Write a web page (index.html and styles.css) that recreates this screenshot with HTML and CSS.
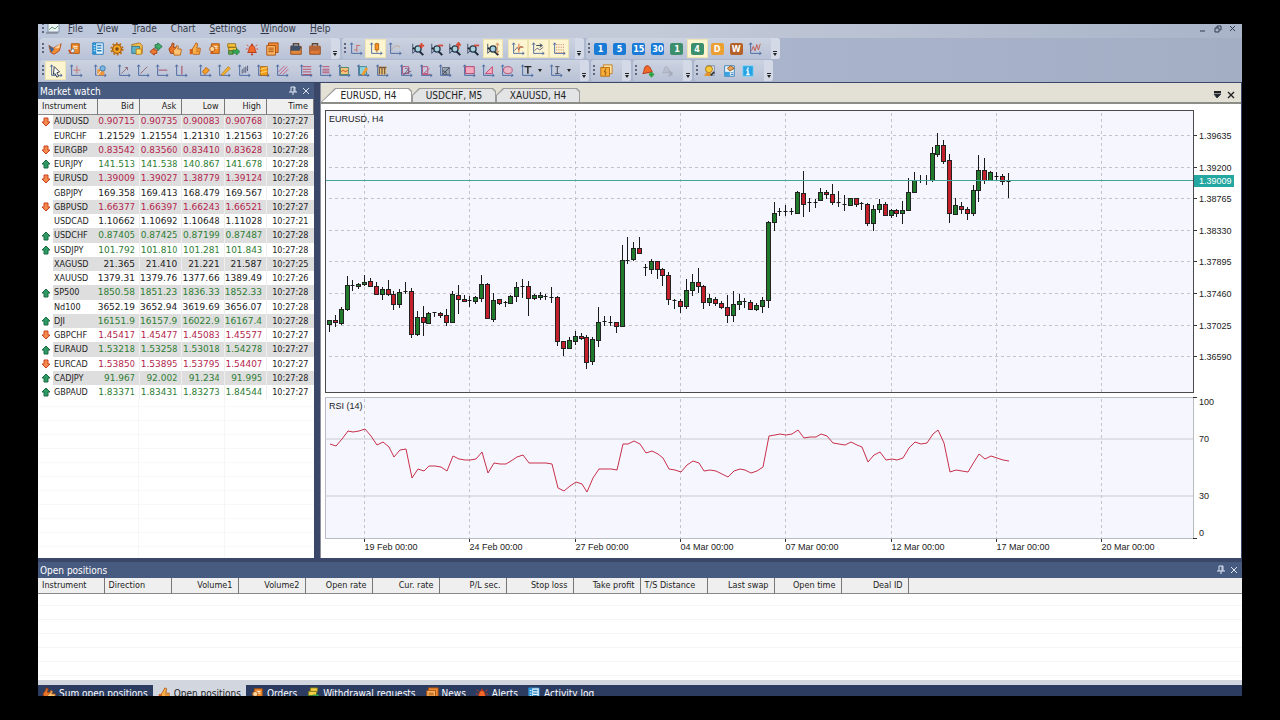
FILE: index.html
```html
<!doctype html>
<html lang="en">
  <head>
    <meta charset="utf-8">
    <title>EURUSD, H4</title>
    <link rel="stylesheet" href="styles.css">
  </head>
  <body>
    <div class="app">
      <nav class="menubar">
        <i class="grip"></i>
        <svg class="menu-icon" viewBox="0 0 14 12"><rect x="2" y="0" width="11" height="9" fill="#eef4f4" stroke="#7f93a8"/><path d="M3 7l3-3 3 2 3-3" stroke="#5d9c78" fill="none"/><path d="M0 10h12" stroke="#6b6f79"/></svg>
        <button><u>F</u>ile</button>
        <button><u>V</u>iew</button>
        <button><u>T</u>rade</button>
        <button>Chart</button>
        <button><u>S</u>ettings</button>
        <button><u>W</u>indow</button>
        <button><u>H</u>elp</button>
        <div class="window-buttons">
          <button aria-label="Minimize"><svg viewBox="0 0 10 10"><path d="M2 7h5" /></svg></button>
          <button aria-label="Restore"><svg viewBox="0 0 10 10"><path d="M4 4V2h4v4H7M2 4h4v4H2z" /></svg></button>
          <button aria-label="Close"><svg viewBox="0 0 10 10"><path d="M2 2l5 5M7 2l-5 5" /></svg></button>
        </div>
      </nav>
      <div class="toolbar-row" id="toolbarTop"></div>
      <div class="toolbar-row" id="toolbarBottom"></div>

      <main class="workspace">
        <section class="market">
          <header class="panel-title">
            <h2>Market watch</h2>
            <button aria-label="Pin"><svg viewBox="0 0 10 10"><path d="M3 1v5M3 1h4v5M6 1v5M1 6h8M5 6v3" /></svg></button>
            <button aria-label="Close"><svg viewBox="0 0 10 10"><path d="M2 2l6 6M8 2l-6 6" /></svg></button>
          </header>
          <div class="market-body">
            <table>
              <colgroup>
                <col class="col-arrow"><col class="col-name"><col><col><col><col><col class="col-time">
              </colgroup>
              <thead>
                <tr><th colspan="2" class="left">Instrument</th><th>Bid</th><th>Ask</th><th>Low</th><th>High</th><th>Time</th></tr>
              </thead>
              <tbody id="quotes"></tbody>
            </table>
          </div>
        </section>

        <section class="charts">
          <div class="chart-tabs">
            <button class="active"><span>EURUSD, H4</span></button>
            <button><span>USDCHF, M5</span></button>
            <button><span>XAUUSD, H4</span></button>
            <div class="tab-tools">
              <button aria-label="Chart list"><svg viewBox="0 0 10 10"><path d="M1 2h7" stroke="#222" stroke-width="2"/><path d="M1 4h7L4 8z" fill="#222"/></svg></button>
              <button aria-label="Close chart"><svg viewBox="0 0 10 10"><path d="M1 2l6 6M7 2l-6 6" stroke="#222" stroke-width="1.4"/></svg></button>
            </div>
          </div>
          <div class="chart" id="chart"></div>
        </section>
      </main>

      <section class="positions">
        <header class="panel-title">
          <h2>Open positions</h2>
          <button aria-label="Pin"><svg viewBox="0 0 10 10"><path d="M3 1v5M3 1h4v5M6 1v5M1 6h8M5 6v3" /></svg></button>
          <button aria-label="Close"><svg viewBox="0 0 10 10"><path d="M2 2l6 6M8 2l-6 6" /></svg></button>
        </header>
        <div class="positions-body">
          <table>
            <thead>
              <tr>
                <th class="left">Instrument</th><th class="left">Direction</th><th>Volume1</th><th>Volume2</th>
                <th>Open rate</th><th>Cur. rate</th><th>P/L sec.</th><th>Stop loss</th><th>Take profit</th>
                <th class="left">T/S Distance</th><th>Last swap</th><th>Open time</th><th>Deal ID</th><td></td>
              </tr>
            </thead>
          </table>
        </div>
        <div class="bottom-tabs" id="bottomTabs"></div>
      </section>
    </div>

    <script>
      const axes = '<path d="M3 1v12h12M1.500 3L3 1l1.500 2M13 11.500l2 1.500-2 1.500" stroke="#41619c"/>';
      const lens = '<path d="M2 2v11M2 13l3-3" stroke="#354766"/><path d="M2 7l3 1" stroke="#222" stroke-width="2"/><circle cx="8" cy="8" r="3.500" fill="#a9d3dc" stroke="#263a50" stroke-width="1.500"/><path d="M10 11l4 4" stroke="#1d2b3c" stroke-width="2.400"/>';
      const sheet = '<path d="M5 2h9v11H5z" fill="#f08a24" stroke="#a8500f"/><path d="M7 5h5M7 7h5" stroke="#fff"/>';
      const thumb = '<path d="M2 8h3v6H2z" fill="#d8621c"/><path d="M5 8l3-5 1-2 2 1-1 5h4v2l-1 5H6l-1-1z" fill="#fbb04a" stroke="#b85a12"/><path d="M9 9h4M9 11h4" stroke="#c8701c"/>';
      const green = '<path d="M8 9h4V7l4 4-4 4v-2H8z" fill="#35a555" stroke="#1c7338" stroke-width=".6"/>';
      const bell = '<path d="M3 12c2-2 1-8 5-8s3 6 5 8z" fill="#f0692a" stroke="#b33412"/><path d="M8 2v2M7 14h2" stroke="#b33412" stroke-width="2"/>';
      const brief = (body, lid) => '<path d="M5 5V2h6v3" stroke="#5b4636" stroke-width="1.500"/><path d="M2 5h12v9H2z" fill="' + body + '" stroke="#8b4517"/><path d="M2 4h9l3 2-2 4H2z" fill="' + lid + '"/>';

      const icons = {
        open: '<path d="M1 4l5 3 9-5-2 8-6 4-4-2z" fill="#f38a35" stroke="#b44d17"/><path d="M1 4l3 8 3-4z" fill="#35659a"/><path d="M7 7l7-5-1 5z" fill="#ffd39a"/>',
        save: sheet + '<path d="M2 13l5-6 2 4z" fill="#fff" stroke="#6b7f96"/><path d="M2 9l3 4" stroke="#d95017" stroke-width="2"/>',
        list: '<path d="M2 1h12v13H2z" fill="#e9f7ff" stroke="#1d70b5"/><path d="M2 1h4v13H2z" fill="#2590d4"/><path d="M7 4h5M7 7h5M7 10h5" stroke="#267fba" stroke-width="1.500"/><path d="M3 4h2M3 7h2M3 10h2" stroke="#fff"/>',
        gear: '<circle cx="8" cy="8" r="5" fill="#f7a726" stroke="#a75c0a" stroke-width="1.500"/><circle cx="8" cy="8" r="6.500" stroke="#bf6d0c" stroke-dasharray="2 2.100" stroke-width="2"/><circle cx="8" cy="8" r="2" fill="#7d4a12"/>',
        cards: '<path d="M2 3l9-2 3 3v9H4z" fill="#f7c04b" stroke="#b06d13"/><path d="M2 5h9v8H2z" fill="#5eb3c9" stroke="#2b778c"/><path d="M7 8h6v6H7z" fill="#ffdb6b" stroke="#b87816"/>',
        swap: '<path d="M7 3h3V1l5 4-5 5V7H7z" fill="#3fae66" stroke="#217444"/><path d="M9 9H6V7l-5 4 5 4v-2h3z" fill="#ee7a32" stroke="#a83f10"/>',
        thumbs: '<path d="M1 8l3-4 1-3 2 1-1 4h3v4l-1 3H3z" fill="#e8742c" stroke="#9a3f0d"/><path d="M6 10l3-3 1-3 2 1-1 3h4v3l-1 4H7z" fill="#fdc374" stroke="#b86213"/>',
        thumb: thumb,
        orders: sheet + '<circle cx="6" cy="8" r="3" fill="#fbd49a" stroke="#b45814"/><path d="M3 13l3-3 2 3z" fill="#d65216"/>',
        deals: '<path d="M2 2h9v4H2zM3 6h9v4H3z" fill="#fbc53d" stroke="#947018"/><path d="M3 10h5v4H3z" fill="#62aa4f" stroke="#3a7430"/>' + green,
        alarm: bell + '<path d="M2 3l2 2M14 3l-2 2M1 8h2M13 8h2" stroke="#e33d1d"/>',
        news: '<path d="M4 1h11v11H4z" fill="#ef8a33" stroke="#a84d0e"/><path d="M2 4h10v11H2z" fill="#f9b25f" stroke="#a84d0e"/><path d="M4 7h6M4 9h6M4 11h6" stroke="#a84d0e"/>',
        case1: brief("#e48a38", "#3d5068"),
        case2: brief("#e07a35", "#b5653a"),
        pointer: axes + '<path d="M6 3l6 6-3 1 2 4-2 1-2-4-2 1z" fill="#fff" stroke="#222b3e"/>',
        cross: axes + '<path d="M9 2v9M5 7h8" stroke="#c76e67"/>',
        shapes: axes + '<rect x="5" y="6" width="8" height="7" fill="#f0963b"/><circle cx="11" cy="5" r="3" fill="#7bb7df" stroke="#3c78aa"/><path d="M5 13l4-5" stroke="#fff"/>',
        ray: axes + '<path d="M5 11l7-7M9 4h3v3" stroke="#8d6674"/>',
        trend: axes + '<path d="M5 11l8-8" stroke="#8d6674"/>',
        hline: axes + '<path d="M4 7h10" stroke="#9b3f58"/>',
        vline: axes + '<path d="M9 2v10" stroke="#a52e45"/>',
        pen: axes + '<path d="M5 9l4-5 4 3-5 5z" fill="#f5a127" stroke="#b7610e"/>',
        pens: axes + '<path d="M5 12l8-9 2 2-8 8z" fill="#f9bc32" stroke="#bf760d"/>',
        bars: axes + '<path d="M6 6v5M8 4v6M10 3v7M12 2v6" stroke="#444c6a"/><path d="M5 9l8-5" stroke="#8b90a6"/>',
        flag: axes + '<path d="M5 3h8v10H5z" fill="#f6a11d" stroke="#a66211"/><path d="M5 6l8-2M5 10l8-2" stroke="#ffdf75"/>',
        hatch: axes + '<path d="M4 9l7-7M5 12l9-9M9 12l6-6" stroke="#c24e7a"/>',
        levels: axes + '<path d="M4 3h10M4 6h10M4 9h10M4 12h10" stroke="#b84667"/>',
        levels2: axes + '<path d="M5 3h8M5 6h8M5 8h8M5 10h8" stroke="#b84667"/>',
        wave: axes + '<path d="M4 4h9v8H4z" fill="#f5c57c" stroke="#42815b"/><path d="M5 9c3-5 4 3 7-2" stroke="#c53923"/>',
        fibo: axes + '<path d="M4 3h8v9H4z" fill="#8fd2db" stroke="#35808d"/><path d="M6 12l5-8 3 1-5 8z" fill="#f29b31"/>',
        columns: axes + '<path d="M4 3h9v9H4z" fill="#eec477"/><path d="M5 5v7M8 3v9M11 4v8M4 4h9" stroke="#775b46" stroke-width="1.500"/>',
        fan: axes + '<path d="M4 3h7v8H4z" stroke="#b54778"/><path d="M5 12l7-7M5 12l9-4M7 5c4 0 5 3 4 6" stroke="#765879"/>',
        gann: axes + '<path d="M4 3h6v8H4z" stroke="#b54778"/><path d="M4 12l8-7M4 12h9" stroke="#bf5175"/>',
        arcs: axes + '<path d="M5 4h8v8H5z" fill="#9aa6b2" stroke="#5b6879"/><path d="M5 12l8-8M5 8c4 0 5 2 4 4" stroke="#333d50"/>',
        rect: axes + '<path d="M4 3h10v8H4z" fill="#f2aac0" stroke="#a93b67"/>',
        tri: axes + '<path d="M5 11l8-8v8z" fill="#f5a9bf" stroke="#c64069"/>',
        oval: axes + '<ellipse cx="9" cy="7" rx="5" ry="4" fill="#e9b7c9" stroke="#a94d70"/>',
        text: axes + '<path d="M5 3h8M9 3v8" stroke="#222" stroke-width="1.600"/>',
        label: axes + '<path d="M7 3h5M9.500 3v8M7 11h5" stroke="#3c4150"/>',
        ohlc: axes + '<path d="M9 3v8M6 9h3M9 4h4" stroke="#c8685b"/>',
        candle: axes + '<path d="M9 1v11" stroke="#96511c"/><path d="M7 2h4v7H7z" fill="#f8961f" stroke="#b75f09"/>',
        curve: axes + '<path d="M4 9c3-5 6-6 10-3" stroke="#c1a17b"/>',
        zoomIn: lens + '<path d="M9 4h6M12 1v6" stroke="#e0432b" stroke-width="2"/>',
        zoomOut: lens + '<path d="M9 4h6" stroke="#d7473b" stroke-width="2"/>',
        zoomUp: lens + '<path d="M12 8V2M9.500 4L12 1l2.500 3" stroke="#d84d36" stroke-width="2"/>',
        zoomFit: lens + '<path d="M13 2v10M11 4l2-3 2 3M11 10l2 3 2-3" stroke="#d18b58"/>',
        shift: axes + '<path d="M4 10l3-4 2 3 2-4 3 1" stroke="#756a73"/><path d="M9 2v10M9 6h5" stroke="#d9632d"/>',
        scroll: axes + '<path d="M4 10l3-3 3 2 4-3" stroke="#59617a"/><path d="M6 4h6M10 2l3 2-3 2" stroke="#22334e"/>',
        grid: axes + '<path d="M5 3h9M5 6h9M5 9h9M5 12h9" stroke="#cc5d4d" stroke-dasharray="1 1.500"/>',
        indicator: axes + '<path d="M4 10l2-5 2 5 2-7 2 6 2-7" stroke="#c44f42"/>',
        windows: '<path d="M5 1h10v10H5z" fill="#ffe0a3" stroke="#c17a1c"/><path d="M2 4h10v10H2z" fill="#f7ae38" stroke="#b5690d"/><path d="M8 5l-2 4h2l-1 4" stroke="#8a4b0b"/>',
        bellAdd: '<path d="M2 11c2-2 1-9 5-9s4 5 6 7z" fill="#f0692a" stroke="#b33412"/><path d="M9 12h6M12 9v6" stroke="#27a03b" stroke-width="2.400"/>',
        bellOff: '<g opacity=".350"><path d="M3 10c3-3 1-7 4-7s3 4 5 7z" fill="#aab" stroke="#778"/><path d="M10 8l4 5M14 9l-4 5" stroke="#778" stroke-width="2"/></g>',
        support: '<path d="M6 2h8v11H6z" fill="#e7eef7" stroke="#6e829b"/><circle cx="8" cy="6" r="4" fill="#fac93b" stroke="#9b6c15"/><path d="M2 13l4-4 5 2-2 3z" fill="#e3922b"/><path d="M10 13l4-4" stroke="#333" stroke-width="2"/>',
        report: '<path d="M3 2h11v12H3z" fill="#e7f5ff" stroke="#327cb5"/><path d="M3 9h6v5H3z" fill="#3ca3df"/><path d="M6 5l4-3 4 3-5 3z" fill="#e7a357" stroke="#98551b"/><path d="M10 10h3M10 12h3" stroke="#327cb5"/>',
        info: '<path d="M2 2h12v12H2z" fill="#26a3e3" stroke="#93d5f6"/><path d="M8 4v2M8 7v5M6 12h4M6 7h2" stroke="#fff" stroke-width="1.600"/>',
        withdraw: '<path d="M5 1h8v4H5zM3 5h9v5H3z" fill="#f7cd44" stroke="#888019"/><path d="M2 10h7v4H2z" fill="#4aa548" stroke="#2e7a34"/>' + green
      };

      function icon(name) {
        return `<svg class="icon" viewBox="0 0 16 16" fill="none" aria-hidden="true">${icons[name]}</svg>`;
      }

      // "|" is a gap, "*" marks a pressed button, "v" a button with a menu arrow, "#" a timeframe
      const toolbarTop = [
        ["main", "open save | list gear cards swap thumbs thumb orders deals alarm news | case1 case2"],
        ["view", "ohlc *candle curve | zoomIn zoomOut zoomUp zoomOut *zoomFit | *shift *scroll *grid"],
        ["frames", "#1:blue #5:blue #15:blue #30:blue #1:green *#4:green #D:orange #W:brown indicator"],
      ];
      const toolbarBottom = [
        ["draw", "*pointer cross | shapes | ray trend hline vline | pen pens bars flag hatch | levels levels2 wave fibo columns | fan gann arcs | rect tri oval vtext vlabel"],
        ["single", "windows"],
        ["pair", "bellAdd bellOff"],
        ["help", "support report info"],
      ];

      function toolButton(item) {
        if (item === "|") return '<i class="gap"></i>';
        let cls = "tool";
        if (item[0] === "*") {
          cls += " pressed";
          item = item.slice(1);
        }
        if (item[0] === "#") {
          const [label, color] = item.slice(1).split(":");
          return `<button class="${cls}"><span class="frame ${color}">${label}</span></button>`;
        }
        if (item === "vtext" || item === "vlabel") {
          return `<button class="${cls} wide" aria-label="${item.slice(1)}">${icon(item.slice(1))}<i class="arrow"></i></button>`;
        }
        return `<button class="${cls}" aria-label="${item}">${icon(item)}</button>`;
      }

      function renderToolbar(id, bars) {
        document.getElementById(id).innerHTML = bars
          .map(([name, items]) => `<div class="toolbar ${name}"><i class="grip"></i>${items.split(" ").map(toolButton).join("")}<button class="more" aria-label="More"><i class="arrow"></i></button></div>`)
          .join("");
      }

      const quotes = [
        ["d", "AUDUSD", "0.90715", "0.90735", "0.90083", "0.90768", "27"],
        ["", "EURCHF", "1.21529", "1.21554", "1.21310", "1.21563", "26"],
        ["d", "EURGBP", "0.83542", "0.83560", "0.83410", "0.83628", "28"],
        ["u", "EURJPY", "141.513", "141.538", "140.867", "141.678", "28"],
        ["d", "EURUSD", "1.39009", "1.39027", "1.38779", "1.39124", "28"],
        ["", "GBPJPY", "169.358", "169.413", "168.479", "169.567", "28"],
        ["d", "GBPUSD", "1.66377", "1.66397", "1.66243", "1.66521", "27"],
        ["", "USDCAD", "1.10662", "1.10692", "1.10648", "1.11028", "21"],
        ["u", "USDCHF", "0.87405", "0.87425", "0.87199", "0.87487", "28"],
        ["u", "USDJPY", "101.792", "101.810", "101.281", "101.843", "28"],
        ["", "XAGUSD", "21.365", "21.410", "21.221", "21.587", "25"],
        ["", "XAUUSD", "1379.31", "1379.76", "1377.66", "1389.49", "26"],
        ["u", "SP500", "1850.58", "1851.23", "1836.33", "1852.33", "28"],
        ["", "Nd100", "3652.19", "3652.94", "3619.69", "3656.07", "28"],
        ["u", "DJI", "16151.9", "16157.9", "16022.9", "16167.4", "28"],
        ["d", "GBPCHF", "1.45417", "1.45477", "1.45083", "1.45577", "27"],
        ["u", "EURAUD", "1.53218", "1.53258", "1.53018", "1.54278", "27"],
        ["d", "EURCAD", "1.53850", "1.53895", "1.53795", "1.54407", "27"],
        ["u", "CADJPY", "91.967", "92.002", "91.234", "91.995", "28"],
        ["u", "GBPAUD", "1.83371", "1.83431", "1.83273", "1.84544", "27"],
      ];
      const moves = {
        u: ["up", '<svg viewBox="0 0 10 10"><path d="M5 1l4 4H7v4H3V5H1z" fill="#2c9a62" stroke="#1b6b45"/></svg>'],
        d: ["down", '<svg viewBox="0 0 10 10"><path d="M5 9l4-4H7V1H3v4H1z" fill="#f58a4c" stroke="#c9401f"/></svg>'],
        "": ["", ""],
      };

      function renderQuotes() {
        document.getElementById("quotes").innerHTML = quotes
          .map(([dir, name, ...rest]) => {
            const sec = rest.pop();
            // fractional pip is set smaller, metals and indices have none
            const cells = rest.map((p) => {
              const small = /^\d\.\d{5}$|^\d{3}\.\d{3}$/.test(p) || name === "CADJPY";
              return `<td class="price">${small ? p.slice(0, -1) + "<small>" + p.slice(-1) + "</small>" : p}</td>`;
            });
            return `<tr class="${moves[dir][0]}"><td class="dir">${moves[dir][1]}</td><td class="name">${name}</td>${cells.join("")}<td class="time">10:27:${sec}</td></tr>`;
          })
          .join("");
      }

      // high, body top, body bottom, low, direction (g up, r down, k flat), measured down from the top of the pane
      const candles = `210 210 214 222 g,205 210 212 217 r,197 199 213 215 g,166 175 199 201 g,170 175 176 181 k,173 174 176 179 g,
        165 172 174 176 g,168 171 176 177 r,172 176 184 185 r,177 179 184 190 g,170 179 184 186 r,181 184 194 200 r,
        179 182 194 198 g,172 181 182 184 k,178 181 224 228 r,201 207 224 226 g,196 207 212 226 r,202 203 213 213 g,
        202 202 203 207 k,202 203 205 208 r,199 205 212 216 r,181 184 212 213 g,175 185 189 204 r,185 189 191 192 r,
        186 190 191 197 k,186 187 191 194 g,165 174 188 192 g,173 174 208 209 r,183 190 209 212 g,189 189 193 195 r,
        191 192 193 197 k,185 186 193 194 g,172 177 186 192 g,169 176 177 188 k,171 176 188 206 r,184 185 188 190 g,
        182 185 187 190 g,184 186 187 190 k,177 187 188 193 k,186 187 231 236 r,231 231 238 246 r,227 230 238 239 g,
        221 226 231 235 g,223 226 228 230 r,225 227 252 259 r,227 229 251 255 g,197 212 230 237 g,206 211 212 216 k,
        206 212 213 216 k,212 212 216 223 r,135 150 216 216 g,127 150 151 154 k,132 138 149 151 g,127 138 143 144 r,
        154 157 159 166 k,149 151 159 164 g,151 151 159 169 r,158 159 165 176 r,162 165 189 195 r,189 190 191 199 k,
        189 191 196 203 r,169 180 196 199 g,164 172 180 186 g,158 172 176 183 r,175 176 192 199 r,184 188 192 196 g,
        187 189 193 196 r,191 193 197 199 r,185 197 205 213 r,181 194 205 212 g,184 191 194 200 g,188 191 192 198 k,
        190 192 199 200 r,193 195 199 201 g,187 190 196 203 g,111 112 190 198 g,92 103 112 121 g,98 101 102 106 k,
        95 101 102 106 k,98 101 102 105 k,81 82 103 104 g,61 83 94 107 r,88 92 93 102 k,89 92 93 98 k,78 82 90 91 g,
        80 82 84 89 r,74 84 92 95 r,81 92 93 97 k,85 94 95 101 k,88 88 95 96 g,88 88 94 97 r,92 93 94 100 k,
        93 94 113 116 r,95 99 113 121 g,89 94 99 103 g,92 94 105 106 r,99 100 105 108 g,99 100 103 107 r,91 100 103 114 g,
        68 82 100 100 g,62 70 82 83 g,65 70 71 73 k,65 70 71 75 k,37 43 70 72 g,23 35 44 47 g,30 35 51 54 r,
        44 50 103 113 r,88 95 104 104 g,92 96 99 104 r,97 99 103 110 r,75 80 103 106 g,45 60 80 92 g,48 60 70 74 r,
        61 62 70 71 g,62 66 67 71 k,64 66 71 75 r,63 71 71 88 k`.split(",").map((c) => c.trim().split(" "));

      const rsi = [
        47, 49, 42, 34, 35, 34, 32, 39, 48, 45, 50, 60, 53, 52, 81, 72, 74, 69, 69, 70, 74, 59, 62, 63, 63, 62, 55, 76, 66, 67,
        67, 64, 60, 58, 66, 66, 66, 66, 67, 91, 94, 89, 85, 87, 95, 81, 72, 72, 72, 73, 47, 47, 44, 47, 56, 54, 57, 61, 72, 73,
        75, 68, 64, 66, 74, 73, 74, 77, 80, 74, 72, 73, 76, 74, 70, 39, 38, 37, 38, 37, 33, 41, 40, 40, 37, 39, 46, 47, 48, 45,
        48, 50, 65, 58, 55, 63, 62, 63, 61, 51, 45, 47, 46, 37, 33, 46, 75, 73, 74, 75, 65, 57, 62, 59, 61, 63, 64,
      ];
      const dates = ["19 Feb", "24 Feb", "27 Feb", "04 Mar", "07 Mar", "12 Mar", "17 Mar", "20 Mar"];
      const colors = { g: "#1f7a2c", r: "#c4202c", k: "#111" };

      function renderChart() {
        const box = document.getElementById("chart");
        const left = 4, top = 6, priceH = 283, rsiTop = 293, rsiH = 141;
        const right = box.clientWidth - 48;
        const crisp = (v) => Math.round(v) + 0.5;
        const candleX = (i) => Math.round(8 + i * 5.85);
        let s = `<rect class="pane" x="${left}" y="${rsiTop}" width="${right - left}" height="${rsiH}"/>
          <rect class="pane" x="${left}" y="${top}" width="${right - left}" height="${priceH}"/>`;

        for (let i = 0; i < 8; i++) {
          const y = crisp(top + 25 + i * 31.6);
          s += `<path class="dash" d="M${left + 4} ${y}H${right}"/><path class="tick" d="M${right} ${y}h4"/>`;
          s += `<text x="${right + 6}" y="${y + 3}">${(1.39635 - i * 0.00435).toFixed(5)}</text>`;
        }
        dates.forEach((d, i) => {
          const x = candleX(6 + i * 18) + 0.5;
          s += `<path class="dash" d="M${x} ${top + 3}V${top + priceH}M${x} ${rsiTop + 2}V${rsiTop + rsiH}"/>`;
          s += `<path class="tick" d="M${x} ${rsiTop + rsiH}v4"/><text x="${x}" y="${rsiTop + rsiH + 12}">${d} 00:00</text>`;
        });

        candles.forEach(([high, a, b, low, dir], i) => {
          const x = candleX(i);
          s += `<path class="wick" d="M${x + 0.5} ${top + +high}V${top + +low}"/>`;
          if (dir === "k") s += `<path class="wick" d="M${x - 1.5} ${top + +a + 0.5}h4"/>`;
          else s += `<rect x="${x - 1.5}" y="${top + +a + 0.5}" width="4" height="${Math.max(1, b - a)}" fill="${colors[dir]}" stroke="#222"/>`;
        });

        s += `<path class="last" d="M${left} ${top + 70.5}H${right}"/><rect x="${right}" y="${top + 65}" width="41" height="12" fill="#24a7a1"/>`;
        s += `<text class="last-label" x="${right + 6}" y="${top + 74}">1.39009</text>`;
        s += `<rect class="frame-dark" x="${left + 0.5}" y="${top + 0.5}" width="${right - left}" height="${priceH - 1}"/>`;

        s += `<rect class="frame-light" x="${left + 0.5}" y="${rsiTop + 0.5}" width="${right - left}" height="${rsiH}"/>`;
        s += `<path class="level" d="M${left} ${rsiTop + 42}H${right}M${left} ${rsiTop + 99}H${right}"/>`;
        s += `<path class="rsi" d="M${rsi.map((v, i) => candleX(i) + 1 + " " + (rsiTop + v)).join("L")}"/>`;
        s += `<path class="tick" d="M${right} ${rsiTop + 0.5}h4M${right} ${rsiTop + rsiH + 0.5}h4"/>`;
        [[100, 8], [70, 45], [30, 102], [0, 139]].forEach(([v, y]) => {
          s += `<text x="${right + 6}" y="${rsiTop + y}">${v}</text>`;
        });
        s += `<text x="${left + 4}" y="${top + 12}">EURUSD, H4</text><text x="${left + 4}" y="${rsiTop + 12}">RSI (14)</text>`;
        box.innerHTML = `<svg>${s}</svg>`;
      }

      const bottomTabs = [
        ["thumbs", "Sum open positions"],
        ["thumb", "Open positions"],
        ["orders", "Orders"],
        ["withdraw", "Withdrawal requests"],
        ["news", "News"],
        ["alarm", "Alerts"],
        ["list", "Activity log"],
      ];
      document.getElementById("bottomTabs").innerHTML = bottomTabs
        .map(([name, label], i) => `<button class="${i === 1 ? "active" : ""}">${icon(name)}${label}</button>`)
        .join("");

      renderToolbar("toolbarTop", toolbarTop);
      renderToolbar("toolbarBottom", toolbarBottom);
      renderQuotes();
      renderChart();
      window.addEventListener("resize", renderChart);
    </script>
  </body>
</html>
```
FILE: styles.css
```css
* {
  box-sizing: border-box;
}

body {
  margin: 0;
  height: 100vh;
  padding: 24px 38px;
  background: #000;
  color: #222;
  font-family: "DejaVu Sans Condensed", "DejaVu Sans", sans-serif;
  font-size: 10px;
}

button {
  padding: 0;
  border: none;
  background: none;
  color: inherit;
  font: inherit;
}

.app {
  height: 100%;
  display: flex;
  flex-direction: column;
  overflow: hidden;
  background: #3a4768;
}

/* menu */
.menubar {
  display: flex;
  align-items: center;
  height: 14px;
  padding: 0 4px 4px 4px;
  background: linear-gradient(90deg, #bdc7dc, #c3cad8 50%, #a9b4c9);
  color: #303644;
}

.menubar > button {
  line-height: 10px;
  margin-right: 14px;
}

.menu-icon {
  width: 14px;
  height: 12px;
  margin: 0 8px 0 1px;
}

.window-buttons {
  display: flex;
  gap: 5px;
  margin-left: auto;
}

.window-buttons button,
.window-buttons svg,
.panel-title svg,
.tab-tools svg {
  display: block;
  width: 10px;
  height: 10px;
  fill: none;
  stroke: #333b4c;
}

/* toolbars */
.toolbar-row {
  display: flex;
  gap: 2px;
  height: 22px;
  padding: 0 0 1px 2px;
  background: linear-gradient(90deg, #b3bfd6, #a3aec5);
}

.toolbar {
  display: flex;
  align-items: center;
  padding-left: 2px;
  border-radius: 3px;
  background: linear-gradient(#ccd3e1, #b9c2d6);
}

.main { width: 300px; }
.view { width: 242px; }
.frames { width: 194px; }
.draw { width: 549px; }
.single { width: 40px; }
.pair { width: 59px; }
.help { width: 79px; }

.grip {
  width: 2px;
  height: 12px;
  margin-right: 1px;
  background: repeating-linear-gradient(#5d6880 0 2px, transparent 2px 4px);
}

.gap {
  width: 5px;
}

.tool {
  flex: 1;
  height: 19px;
  display: flex;
  align-items: center;
  justify-content: center;
}

.tool.wide {
  flex: 1.5;
}

.tool.pressed {
  background: #fdf4d0;
  border: 1px solid #eee3b2;
}

.icon {
  width: 14px;
  height: 14px;
  flex: none;
}

.arrow {
  margin-left: 4px;
  border: 2px solid transparent;
  border-top: 3px solid #222;
  border-bottom: none;
}

.more {
  width: 9px;
  height: 100%;
  margin-left: 6px;
  display: flex;
  align-items: flex-end;
  justify-content: center;
  padding-bottom: 3px;
  border-radius: 0 3px 3px 0;
  background: #d3d9e6;
}

.more .arrow {
  margin: 0;
  position: relative;
}

.more .arrow::before {
  content: "";
  position: absolute;
  left: -2px;
  top: -5px;
  width: 4px;
  height: 1px;
  background: #222;
}

.frame {
  width: 13px;
  border-radius: 2px;
  color: #fff;
  font-size: 9px;
  font-weight: bold;
  line-height: 12px;
  text-align: center;
}

.blue { background: #1a7bd6; }
.green { background: #3c8f6c; }
.orange { background: #eda032; }
.brown { background: #b4622a; }

/* panels */
.workspace {
  flex: 1;
  min-height: 0;
  display: flex;
  gap: 6px;
  padding: 1px 1px 4px 0;
}

.panel-title {
  display: flex;
  align-items: center;
  gap: 3px;
  height: 16px;
  padding: 0 3px 0 2px;
  background: #475a80;
  color: #fff;
}

.panel-title h2 {
  margin: 0 auto 0 0;
  font-size: 10px;
  font-weight: normal;
}

.panel-title svg {
  stroke: #dfe6f5;
}

table {
  width: 100%;
  table-layout: fixed;
  border-collapse: collapse;
  font-size: 9px;
}

th,
td {
  padding: 0;
  overflow: hidden;
  white-space: nowrap;
  text-align: right;
}

th {
  padding-right: 5px;
  border-right: 1px solid #777;
  background: #efefef;
  font-weight: normal;
}

th.left {
  padding-left: 4px;
  text-align: left;
}

thead tr {
  height: 15px;
  border-bottom: 1px solid #888;
  background: #efefef;
}

.market {
  width: 276px;
  display: flex;
  flex-direction: column;
}

.market-body {
  flex: 1;
  background:
    linear-gradient(90deg, transparent 100px, #f6f6f6 100px 101px, transparent 101px 186px, #f6f6f6 186px 187px, transparent 187px),
    repeating-linear-gradient(#fff 0 13px, #f8f8f8 13px 14px);
}

.col-arrow { width: 15px; }
.col-name { width: 44px; }
.col-time { width: 47px; }

#quotes tr {
  height: 14px;
  background: #fff;
}

#quotes tr:nth-child(4n + 1) {
  height: 15px;
}

#quotes tr:nth-child(odd) td:not(.dir) {
  background: #dedede;
}

#quotes td {
  line-height: 13px;
}

#quotes .dir svg {
  display: block;
  width: 10px;
  height: 10px;
  margin: 0 auto 0 3px;
}

#quotes .name {
  padding-left: 1px;
  text-align: left;
}

#quotes .price {
  padding-right: 4px;
  border-right: 1px solid #eee;
  font-family: "DejaVu Sans", sans-serif;
}

#quotes small {
  font-size: 8px;
}

#quotes .time {
  padding-right: 5px;
}

.up .price { color: #2d7d32; }
.down .price { color: #b41f4d; }

/* charts */
.charts {
  flex: 1;
  min-width: 0;
  display: flex;
  flex-direction: column;
  border-left: 1px solid #8a8f9b;
  background: #fff;
}

.chart-tabs {
  display: flex;
  height: 21px;
  padding-top: 5px;
  border-bottom: 2px solid #8d8d88;
  background: #e3e0d6;
}

.chart-tabs > button {
  position: relative;
  z-index: 0;
  width: 84px;
  height: 14px;
}

.chart-tabs > .active {
  width: 91px;
  padding-left: 4px;
}

.chart-tabs > button::before,
.chart-tabs > button::after {
  content: "";
  position: absolute;
  z-index: -1;
  inset: 0;
  background: #9b9b9b;
  clip-path: polygon(0 100%, 0 50%, 7px 0, calc(100% - 3px) 0, 100% 3px, 100% 100%);
}

.chart-tabs > button::after {
  inset: 1px 1px 0 1px;
  background: #e3e4e6;
}

.chart-tabs > .active::before,
.chart-tabs > .active::after {
  clip-path: polygon(0 100%, 14px 0, calc(100% - 3px) 0, 100% 3px, 100% 100%);
}

.chart-tabs > .active::after {
  background: #fff;
}

.tab-tools {
  display: flex;
  gap: 4px;
  margin: 0 4px 0 auto;
}

.chart {
  flex: 1;
  min-height: 0;
}

.chart svg {
  display: block;
  width: 100%;
  height: 100%;
  fill: none;
}

.chart text {
  fill: #222;
  font: 9px "Liberation Sans", Arial, sans-serif;
}

.chart .last-label { fill: #fff; }
.pane { fill: #f6f7fe; }
.dash { stroke: #c3c3c9; stroke-dasharray: 3 3; }
.tick { stroke: #333; }
.wick { stroke: #1a1a1a; }
.last { stroke: #46a49f; }
.level { stroke: #c9cbd0; }
.rsi { stroke: #c8304a; }
.frame-dark { stroke: #4b4b4f; }
.frame-light { stroke: #b9bbc2; }

/* positions */
.positions-body {
  height: 102px;
  background: repeating-linear-gradient(#fff 0 13px, #f5f5f5 13px 14px);
}

.positions th {
  width: 67px;
}

.positions th:first-child {
  width: 66px;
}

/* bottom tabs, cut off by the window edge */
.bottom-tabs {
  display: flex;
  height: 16px;
  padding-top: 4px;
  overflow: hidden;
  background: #2c3c60;
  border-top: 1px solid #d2d6df;
  box-shadow: inset 0 4px #d2d6df;
  color: #fff;
}

.bottom-tabs button {
  display: flex;
  align-items: center;
  gap: 3px;
  height: 17px;
  padding: 0 5px 0 4px;
  white-space: nowrap;
}

.bottom-tabs .active {
  background: #d2d6df;
  color: #222;
}
```
